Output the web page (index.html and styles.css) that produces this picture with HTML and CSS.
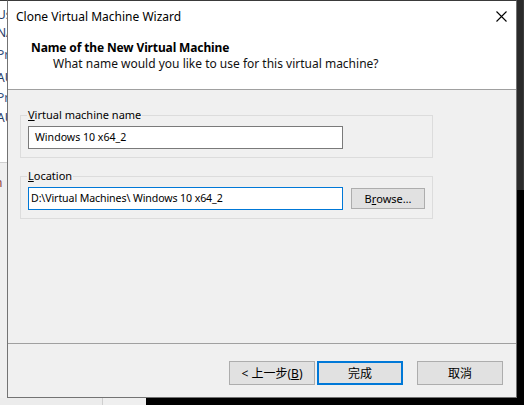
FILE: index.html
```html
<!DOCTYPE html>
<html>
<head>
<meta charset="utf-8">
<link rel="stylesheet" href="styles.css">
</head>
<body>
<div class="desktop">
  <div class="bg-left">
    <div class="bl-top">
      <div class="frag f1">Use</div>
      <div class="frag f2">NAT</div>
      <div class="frag f3">Pre</div>
      <div class="frag f4">AUT</div>
      <div class="frag f5">Pre</div>
      <div class="frag f6">AUT</div>
    </div>
    <div class="bl-bottom">
      <div class="frag f7">n</div>
    </div>
  </div>

  <div class="dialog">
    <div class="titlebar">
      <span class="title">Clone Virtual Machine Wizard</span>
      <svg class="close" width="11" height="11" viewBox="0 0 11 11">
        <path d="M0.5 0.5 L10.5 10.5 M10.5 0.5 L0.5 10.5" stroke="#000" stroke-width="1.1" fill="none"/>
      </svg>
    </div>
    <div class="header">
      <div class="h-title">Name of the New Virtual Machine</div>
      <div class="h-sub">What name would you like to use for this virtual machine?</div>
    </div>
    <div class="sep"></div>
    <div class="content">
      <fieldset class="group">
        <legend><u>V</u>irtual machine name</legend>
        <div class="field name-field">Windows 10 x64_2</div>
      </fieldset>
      <fieldset class="group">
        <legend><u>L</u>ocation</legend>
        <div class="row">
          <div class="field loc-field">D:\Virtual Machines\ Windows 10 x64_2</div>
          <div class="btn browse">B<u>r</u>owse…</div>
        </div>
      </fieldset>
    </div>
    <div class="sep"></div>
    <div class="footer">
      <div class="btn wide back">&lt; 上一步(<u>B</u>)</div>
      <div class="btn wide finish">完成</div>
      <div class="btn wide cancel">取消</div>
    </div>
  </div>

  <div class="bg-right">
    <div class="br-top"></div>
    <div class="br-bottom"></div>
  </div>

  <div class="bg-bottom">
    <div class="bb-light">
      <div class="bb-a"></div>
      <div class="bb-b"></div>
    </div>
    <div class="bb-dark"></div>
  </div>
</div>
</body>
</html>
```

FILE: styles.css
```css
html, body {
  margin: 0;
  padding: 0;
  background: #000;
}

.desktop {
  width: 524px;
  height: 405px;
  display: grid;
  grid-template-columns: 7px 510px 7px;
  grid-template-rows: 398px 7px;
  overflow: hidden;
  font-family: "Noto Sans", "Noto Sans CJK TC", sans-serif;
  font-size: 12px;
  color: #000;
}

/* background window on the left */
.bg-left {
  display: flex;
  flex-direction: column;
  overflow: hidden;
  border-top: 1px solid #3a3a3a;
}
.bl-top {
  height: 161px;
  background: #fff;
  border-bottom: 1px solid #cfcfcf;
  display: flex;
  flex-direction: column;
}
.bl-bottom {
  flex: 1;
  background: #efefef;
  display: flex;
  flex-direction: column;
}
.frag {
  margin-left: -3px;
  white-space: nowrap;
  line-height: 14px;
  color: #1f3a68;
}
.f1 { margin-top: 7px; }
.f2 { margin-top: 4px; }
.f3 { margin-top: 8px; color: #35507e; }
.f4 { margin-top: 9px; }
.f5 { margin-top: 6px; color: #35507e; }
.f6 { margin-top: 6px; }
.f7 { margin-top: 13px; color: #8a3a3a; margin-left: -5px; }

/* dialog window */
.dialog {
  display: flex;
  flex-direction: column;
  border: 1px solid #737373;
  border-top-color: #3a3a3a;
  background: #f0f0f0;
}
.titlebar {
  height: 30px;
  flex: none;
  background: #fff;
  display: flex;
  align-items: center;
  justify-content: space-between;
  padding: 0 9px 0 8px;
}
.title {
  font-size: 12px;
  line-height: 15px;
}
.close {
  display: block;
}
.header {
  height: 58px;
  flex: none;
  box-sizing: border-box;
  background: #fff;
  padding: 9px 0 0 23px;
}
.h-title {
  font-weight: bold;
  line-height: 16px;
  letter-spacing: -0.13px;
}
.h-sub {
  padding-left: 22px;
  line-height: 16px;
  color: #111;
}
.sep {
  height: 1px;
  flex: none;
  background: #a0a0a0;
}
.content {
  height: 253px;
  flex: none;
  box-sizing: border-box;
  padding: 18px 0 0 12px;
  display: flex;
  flex-direction: column;
  gap: 11px;
  font-size: 11px;
}
.group {
  margin: 0;
  width: 413px;
  min-width: 0;
  box-sizing: border-box;
  border: 1px solid #dcdcdc;
  padding: 0 0 8px 7px;
}
.group legend {
  padding: 0 1px;
  margin: 0 0 0 -1px;
  line-height: 14px;
}
.field {
  margin-top: 4px;
  width: 315px;
  height: 23px;
  box-sizing: border-box;
  background: #fff;
  line-height: 21px;
  white-space: nowrap;
  font-size: 10.6px;
}
.name-field {
  border: 1px solid #7a7a7a;
  padding-left: 6px;
}
.loc-field {
  border: 1px solid #0078d7;
  padding-left: 2px;
  letter-spacing: -0.1px;
}
.row {
  display: flex;
  align-items: center;
  gap: 8px;
}
.btn {
  box-sizing: border-box;
  background: #e1e1e1;
  border: 1px solid #adadad;
  display: flex;
  align-items: center;
  justify-content: center;
  white-space: nowrap;
}
.browse {
  width: 74px;
  height: 21px;
  margin-top: 4px;
}
.footer {
  flex: 1;
  box-sizing: border-box;
  padding: 17px 13px 0 0;
  display: flex;
  justify-content: flex-end;
  align-items: flex-start;
}
.wide {
  width: 86px;
  height: 24px;
}
.back { margin-right: 2px; }
.finish {
  border: 2px solid #0078d7;
  margin-right: 14px;
}

/* right side dark desktop */
.bg-right {
  display: flex;
  flex-direction: column;
}
.br-top {
  height: 190px;
  background: #2b2b2b;
  border-right: 1px solid #3a3a3a;
}
.br-bottom {
  flex: 1;
  background: #000;
}

/* bottom strip */
.bg-bottom {
  grid-column: 1 / 4;
  display: flex;
}
.bb-light {
  width: 146px;
  display: flex;
  background: #ececec;
}
.bb-a {
  width: 102px;
  border-right: 1px solid #cfcfcf;
}
.bb-b {
  flex: 1;
  background: #efefef;
}
.bb-dark {
  flex: 1;
  background: #000;
}
```
